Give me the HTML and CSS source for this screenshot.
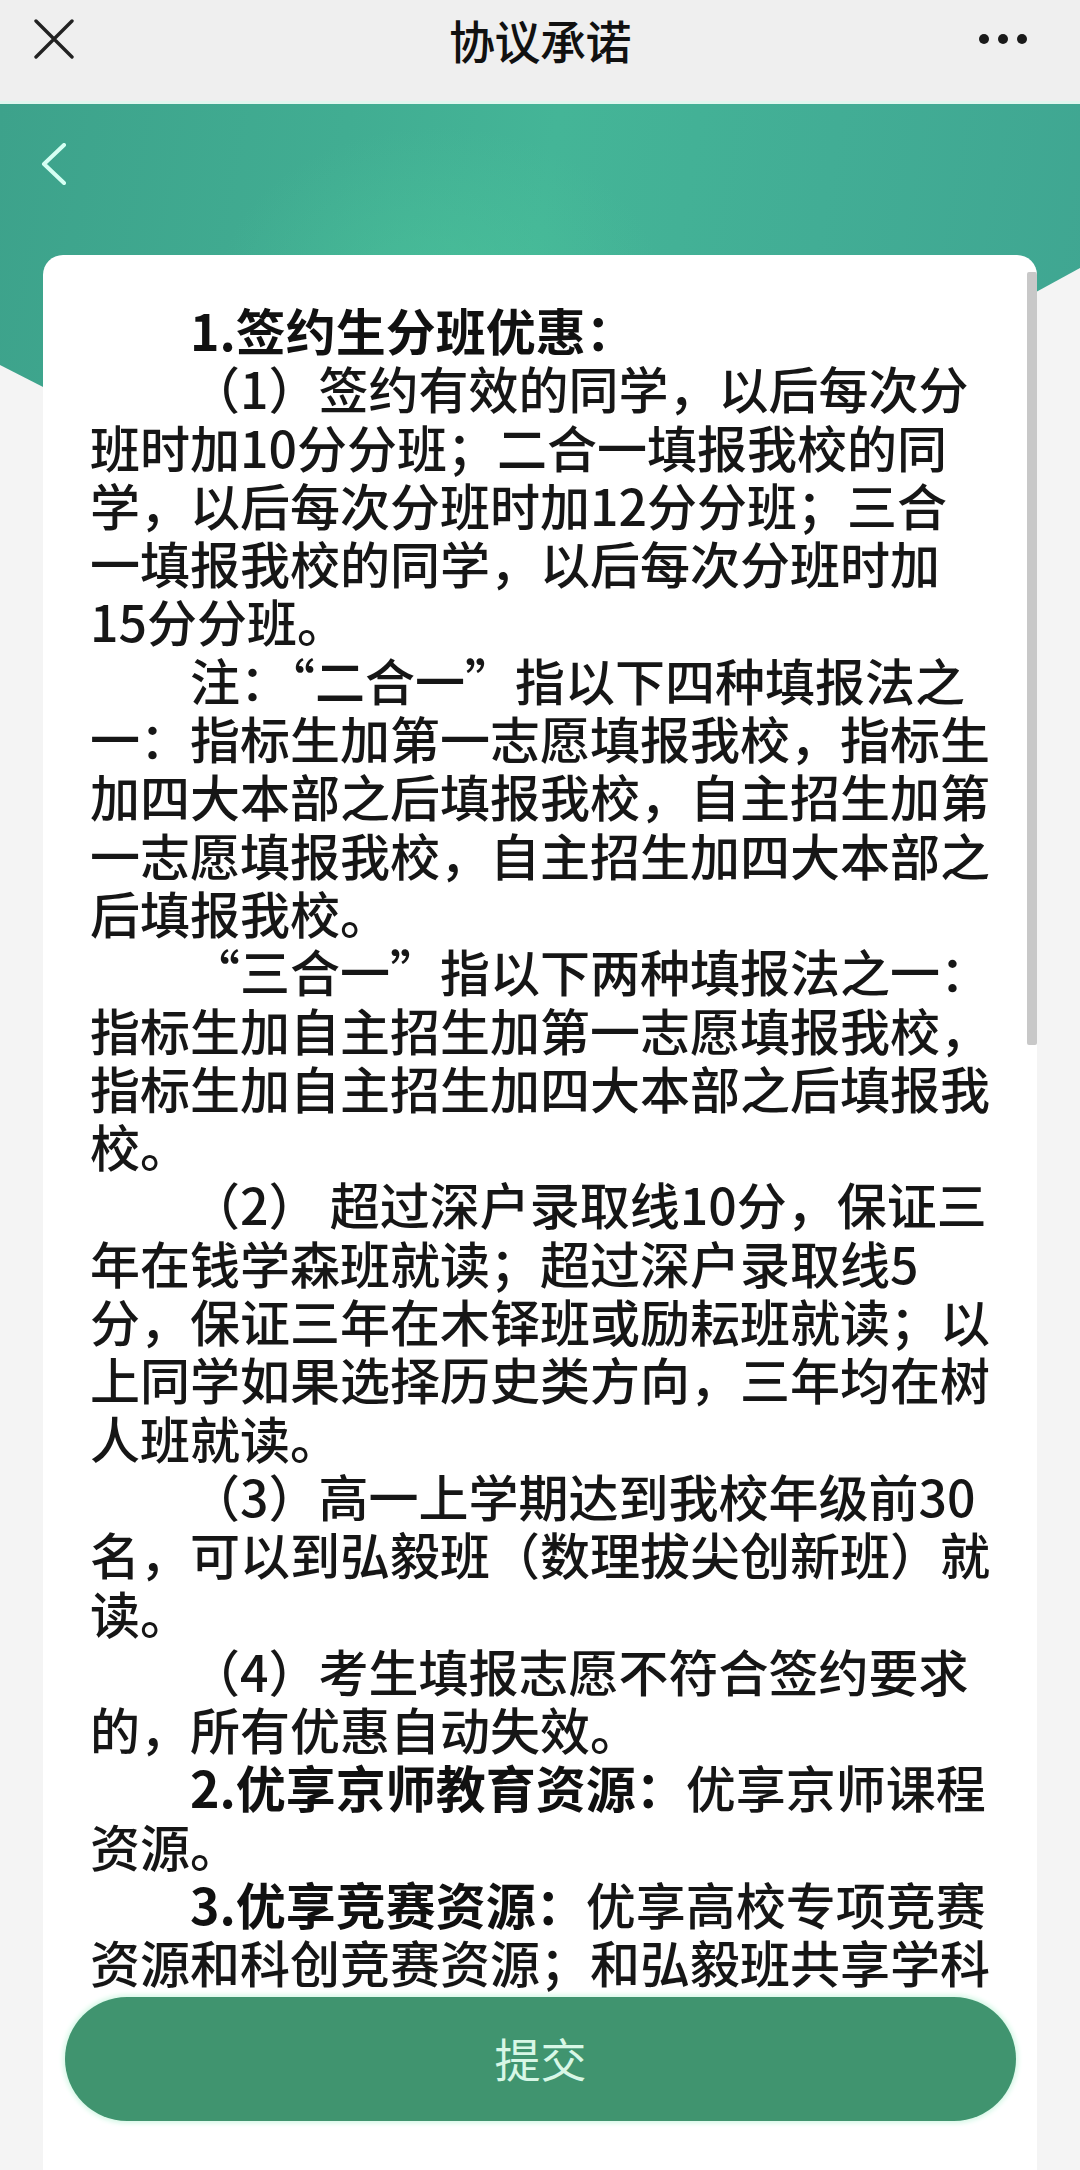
FILE: index.html
```html
<!DOCTYPE html>
<html lang="zh-CN">
<head>
<meta charset="utf-8">
<title>协议承诺</title>
<link rel="stylesheet" href="styles.css">
</head>
<body>
<div class="page">
  <header class="topbar">
    <div class="topbar-row">
      <div class="tb-left">
        <svg class="icon-close" width="40" height="40" viewBox="0 0 40 40">
          <path d="M2 2 L38 38 M38 2 L2 38" stroke="#222" stroke-width="3.4" stroke-linecap="round" fill="none"/>
        </svg>
      </div>
      <div class="tb-title">协议承诺</div>
      <div class="tb-right">
        <svg class="icon-more" width="50" height="12" viewBox="0 0 50 12">
          <circle cx="5" cy="6" r="5" fill="#1a1a1a"/>
          <circle cx="24" cy="6" r="5" fill="#1a1a1a"/>
          <circle cx="43" cy="6" r="5" fill="#1a1a1a"/>
        </svg>
      </div>
    </div>
  </header>

  <section class="hero">
    <svg class="icon-back" width="26" height="42" viewBox="0 0 26 42">
      <path d="M23 2 L3 21 L23 40" stroke="#d6fff3" stroke-width="4" stroke-linecap="round" stroke-linejoin="round" fill="none"/>
    </svg>
  </section>

  <main class="card">
    <div class="scrollbar"></div>
    <div class="content">
      <p class="para"><b>1.签约生分班优惠：</b></p>
      <p class="para">（1）签约有效的同学，以后每次分班时加10分分班；二合一填报我校的同学，以后每次分班时加12分分班；三合一填报我校的同学，以后每次分班时加15分分班。</p>
      <p class="para">注：“二合一”指以下四种填报法之一：指标生加第一志愿填报我校，指标生加四大本部之后填报我校，自主招生加第一志愿填报我校，自主招生加四大本部之后填报我校。</p>
      <p class="para">“三合一”指以下两种填报法之一：指标生加自主招生加第一志愿填报我校，指标生加自主招生加四大本部之后填报我校。</p>
      <p class="para">（2） 超过深户录取线10分，保证三年在钱学森班就读；超过深户录取线5分，保证三年在木铎班或励耘班就读；以上同学如果选择历史类方向，三年均在树人班就读。</p>
      <p class="para">（3）高一上学期达到我校年级前30名，可以到弘毅班（数理拔尖创新班）就读。</p>
      <p class="para">（4）考生填报志愿不符合签约要求的，所有优惠自动失效。</p>
      <p class="para"><b>2.优享京师教育资源：</b>优享京师课程资源。</p>
      <p class="para"><b>3.优享竞赛资源：</b>优享高校专项竞赛资源和科创竞赛资源；和弘毅班共享学科竞赛教练资源。</p>
    </div>
    <div class="footer">
      <button class="submit" type="button">提交</button>
    </div>
  </main>
</div>
</body>
</html>
```

FILE: styles.css
```css
* {
  box-sizing: border-box;
}

html, body {
  margin: 0;
  padding: 0;
}

body {
  width: 1080px;
  height: 2170px;
  overflow: hidden;
  background: #f4f4f4;
  font-family: "Noto Sans CJK SC", "Noto Sans", sans-serif;
  color: #161616;
}

.page {
  width: 1080px;
  height: 2170px;
  display: flex;
  flex-direction: column;
}

/* ---------- top navigation bar ---------- */
.topbar {
  height: 104px;
  background: #efefef;
  border-bottom: 3px solid #e0f6ee;
  flex: none;
}

.topbar-row {
  height: 78px;
  display: grid;
  grid-template-columns: 1fr auto 1fr;
  align-items: center;
}

.tb-left {
  padding-left: 34px;
  display: flex;
  align-items: center;
}

.tb-title {
  font-size: 46px;
  font-weight: 500;
  color: #111;
  line-height: 78px;
  letter-spacing: -0.5px;
}

.tb-right {
  display: flex;
  justify-content: flex-end;
  align-items: center;
  padding-right: 51px;
}

.icon-close,
.icon-more,
.icon-back {
  display: block;
}

/* ---------- green hero ---------- */
.hero {
  flex: none;
  height: 500px;
  padding: 39px 0 0 41px;
  background:
    radial-gradient(ellipse 320px 240px at 440px 190px, rgba(78, 200, 156, 0.5), rgba(78, 200, 156, 0) 70%),
    linear-gradient(100deg, #3da28b 0%, #41ad92 30%, #44b597 48%, #42ad95 72%, #3fa591 100%);
  clip-path: polygon(0 0, 100% 0, 100% 164px, 466px 499px, 0 261px);
}

/* ---------- content card ---------- */
.card {
  position: relative;
  flex: 1;
  margin: -349px 43px 0 43px;
  background: #fff;
  border-radius: 20px 20px 0 0;
  display: flex;
  flex-direction: column;
  overflow: hidden;
}

.scrollbar {
  position: absolute;
  right: 0;
  top: 17px;
  width: 10px;
  height: 773px;
  background: #c8c8c8;
  border-radius: 2px;
}

.content {
  height: 1742px;
  flex: none;
  overflow: hidden;
  padding: 45px 45px 0 47px;
  font-size: 50px;
  font-weight: 500;
  line-height: 58.3px;
}

.para {
  margin: 0;
  text-indent: 2em;
  line-break: strict;
}

.para b {
  font-weight: 700;
  color: #111;
}

/* ---------- footer with submit button ---------- */
.footer {
  flex: 1;
  padding: 0 21px 0 22px;
}

.submit {
  display: block;
  width: 100%;
  height: 124px;
  border: none;
  border-radius: 62px;
  background: #40946f;
  color: #d8f7e6;
  font-family: "Noto Sans CJK SC", sans-serif;
  font-size: 46px;
  font-weight: 400;
  box-shadow: 0 0 5px 2px #d3f7e5;
  padding: 0 0 4px 0;
}
```
